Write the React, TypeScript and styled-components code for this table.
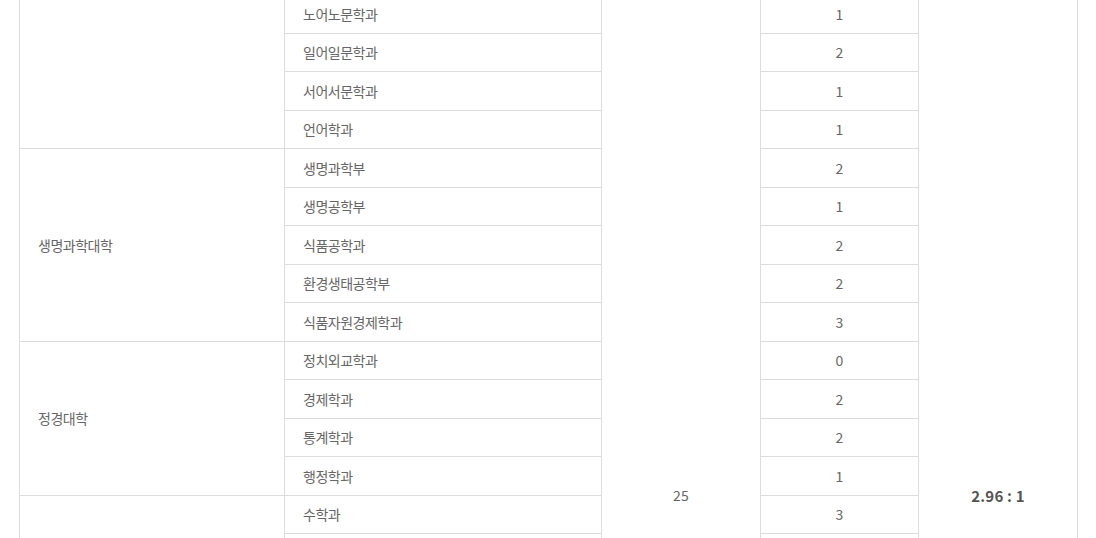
import styled, { createGlobalStyle } from 'styled-components';

const GlobalStyle = createGlobalStyle`
  html, body {
    margin: 0;
    padding: 0;
    background: #fff;
    overflow: hidden;
  }
  body {
    font-family: "Noto Sans CJK KR", "Noto Sans", sans-serif;
    color: #666;
  }
`;

const Page = styled.main`
  /* the view is scrolled down past the first rows of the table */
  margin-top: -391px;
  padding: 0 18px 0 19px;
`;

const Table = styled.table`
  width: 1059px;
  border-collapse: collapse;
  table-layout: fixed;
  border-left: 1px solid #dcdcdc;
  border-right: 1px solid #dcdcdc;
`;

const Col = styled.col<{ $w: number }>`
  width: ${(p) => p.$w}px;
`;

const Cell = styled.td<{ $center?: boolean; $bold?: boolean }>`
  height: 37.5px;
  padding: 0 18px;
  border: 1px solid #dcdcdc;
  vertical-align: middle;
  text-align: ${(p) => (p.$center ? 'center' : 'left')};
  font-size: ${(p) => (p.$bold ? '15px' : '14px')};
  letter-spacing: ${(p) => (p.$center ? '0.2px' : '-0.5px')};
  font-weight: ${(p) => (p.$bold ? 700 : 400)};
  color: ${(p) => (p.$bold ? '#555' : '#666')};
  white-space: nowrap;
`;

type College = { name: string; depts: [string, number][] };

const colleges: College[] = [
  {
    name: '문과대학',
    depts: [
      ['국어국문학과', 2], ['철학과', 1], ['한국사학과', 1], ['사학과', 2],
      ['사회학과', 2], ['한문학과', 1], ['영어영문학과', 3], ['독어독문학과', 1],
      ['불어불문학과', 1], ['중어중문학과', 2], ['노어노문학과', 1], ['일어일문학과', 2],
      ['서어서문학과', 1], ['언어학과', 1],
    ],
  },
  {
    name: '생명과학대학',
    depts: [['생명과학부', 2], ['생명공학부', 1], ['식품공학과', 2], ['환경생태공학부', 2], ['식품자원경제학과', 3]],
  },
  {
    name: '정경대학',
    depts: [['정치외교학과', 0], ['경제학과', 2], ['통계학과', 2], ['행정학과', 1]],
  },
  {
    name: '이과대학',
    depts: [['수학과', 3], ['물리학과', 2], ['화학과', 2], ['지구환경과학과', 1]],
  },
  {
    name: '공과대학',
    depts: [
      ['화공생명공학과', 2], ['신소재공학부', 2], ['건축사회환경공학부', 1], ['건축학과', 1],
      ['기계공학부', 2], ['산업경영공학부', 1], ['전기전자공학부', 3],
    ],
  },
  { name: '의과대학', depts: [['의학과', 4]] },
  {
    name: '사범대학',
    depts: [
      ['교육학과', 1], ['체육교육과', 0], ['가정교육과', 1], ['수학교육과', 2],
      ['국어교육과', 1], ['영어교육과', 2], ['지리교육과', 1], ['역사교육과', 1],
    ],
  },
  { name: '간호대학', depts: [['간호학과', 1]] },
  { name: '정보대학', depts: [['컴퓨터학과', 3], ['데이터과학과', 1]] },
];

const totalRows = colleges.reduce((n, c) => n + c.depts.length, 0);
const widths = [265, 317, 159, 158, 159];

const App = () => {
  return (
    <Page>
      <GlobalStyle />
      <Table>
        <colgroup>
          {widths.map((w, i) => (
            <Col key={i} $w={w} />
          ))}
        </colgroup>
        <tbody>
          {colleges.map((c, ci) =>
            c.depts.map(([dept, count], di) => (
              <tr key={dept}>
                {di === 0 && <Cell rowSpan={c.depts.length}>{c.name}</Cell>}
                <Cell>{dept}</Cell>
                {ci === 0 && di === 0 && (
                  <Cell $center rowSpan={totalRows}>
                    25
                  </Cell>
                )}
                <Cell $center>{count}</Cell>
                {ci === 0 && di === 0 && (
                  <Cell $center $bold rowSpan={totalRows}>
                    2.96 : 1
                  </Cell>
                )}
              </tr>
            ))
          )}
        </tbody>
      </Table>
    </Page>
  );
};

export default App;
